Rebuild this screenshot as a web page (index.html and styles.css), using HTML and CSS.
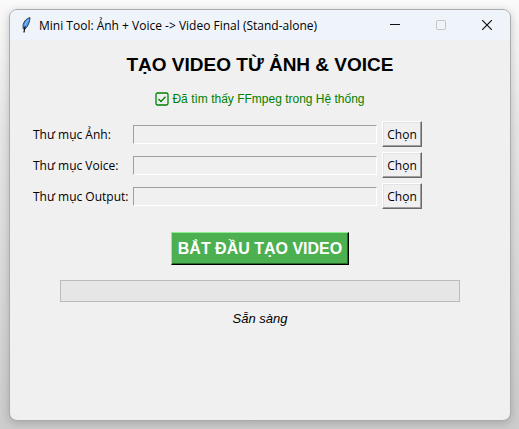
FILE: index.html
```
<!DOCTYPE html>
<html lang="vi">
<head>
  <meta charset="UTF-8">
  <title>Mini Tool: Ảnh + Voice -> Video Final (Stand-alone)</title>
  <link rel="stylesheet" href="styles.css">
</head>
<body>
  <div class="window">
    <div class="titlebar">
      <svg class="app-icon" width="16" height="16" viewBox="0 0 16 16">
        <path d="M12 .6C8.600 1.400 6 4 5.200 7.500L5 11.500 6.800 12C10 9.800 11.900 4.500 12 .6z" fill="#4f9bf0" stroke="#26303c" stroke-width=".9"/>
        <path d="M7.200 9.500C6.600 11.500 6.200 13.500 6 15.500" fill="none" stroke="#0d1117" stroke-width="1.300"/>
        <path d="M10.500 2.500L7 8" fill="none" stroke="#8fc2fa" stroke-width="1"/>
      </svg>
      <span class="title-text">Mini Tool: Ảnh + Voice -&gt; Video Final (Stand-alone)</span>
      <div class="window-buttons">
        <button type="button" class="win-btn" aria-label="Minimize">
          <svg width="10" height="10" viewBox="0 0 10 10"><path d="M0 4.500h10" stroke="#111"/></svg>
        </button>
        <button type="button" class="win-btn" aria-label="Maximize" disabled>
          <svg width="10" height="10" viewBox="0 0 10 10"><rect x=".5" y=".5" width="9" height="9" rx="1" fill="none" stroke="#c3c5c9"/></svg>
        </button>
        <button type="button" class="win-btn" aria-label="Close">
          <svg width="10" height="10" viewBox="0 0 10 10"><path d="M0 0l10 10M10 0L0 10" stroke="#111" stroke-width="1.200"/></svg>
        </button>
      </div>
    </div>

    <div class="content">
      <h1>TẠO VIDEO TỪ ẢNH &amp; VOICE</h1>

      <div class="ffmpeg-status">
        <svg width="14" height="14" viewBox="0 0 14 14">
          <rect x="1" y="1" width="12" height="12" rx="1.500" fill="none" stroke="#008000" stroke-width="1.300"/>
          <path d="M3.500 7l2.500 2.500 4.500-4.800" fill="none" stroke="#008000" stroke-width="1.300"/>
        </svg>
        <span>Đã tìm thấy FFmpeg trong Hệ thống</span>
      </div>

      <form class="folders">
        <label for="imageDir">Thư mục Ảnh:</label>
        <input type="text" id="imageDir" readonly>
        <button type="button" class="browse">Chọn</button>

        <label for="voiceDir">Thư mục Voice:</label>
        <input type="text" id="voiceDir" readonly>
        <button type="button" class="browse">Chọn</button>

        <label for="outputDir">Thư mục Output:</label>
        <input type="text" id="outputDir" readonly>
        <button type="button" class="browse">Chọn</button>
      </form>

      <button type="button" class="start">BẮT ĐẦU TẠO VIDEO</button>

      <progress class="progress" value="0" max="100" aria-labelledby="state"></progress>
      <div class="state" id="state">Sẵn sàng</div>
    </div>
  </div>
</body>
</html>
```
FILE: styles.css
```
* { box-sizing: border-box; }
body {
  display: flex;
  min-height: 100vh;
  margin: 0;
  padding: 9px 8px 8px 9px;
  background: linear-gradient(#fafafa, #e6e6e6 30%, #cccccc);
  font-family: "Open Sans", "Noto Sans", sans-serif;
  font-size: 12px;
  color: #000;
}
.window {
  flex: 1;
  display: flex;
  flex-direction: column;
  border: 1px solid #acacac;
  border-radius: 8px;
  background: #f0f0f0;
  box-shadow: 0 2px 10px rgba(0, 0, 0, 0.2);
  overflow: hidden;
}
.titlebar {
  display: flex;
  align-items: center;
  height: 30px;
  padding-left: 8px;
  background: #eff4fa;
}
.title-text {
  margin-left: 5px;
  white-space: nowrap;
}
.window-buttons {
  display: flex;
  margin-left: auto;
}
.win-btn {
  display: flex;
  align-items: center;
  justify-content: center;
  width: 46px;
  height: 28px;
  padding: 0;
  border: 0;
  background: none;
}
.content {
  display: flex;
  flex-direction: column;
  align-items: center;
  padding: 13px 0;
}
h1 {
  margin: 0;
  font: bold 19px/24px "Liberation Sans", Arial, sans-serif;
}
.ffmpeg-status {
  display: flex;
  align-items: center;
  gap: 3px;
  margin-top: 14px;
  color: #008000;
  font: 12px/16px "Liberation Sans", Arial, sans-serif;
}
.folders {
  display: grid;
  grid-template-columns: 95px 244px 40px;
  align-items: center;
  align-self: flex-start;
  gap: 5px;
  margin: 14px 0 0 23px;
  white-space: nowrap;
}
.folders input {
  width: 100%;
  height: 19px;
  padding: 0 2px;
  border: 1px solid;
  border-color: #a0a0a0 #fff #fff #a0a0a0;
  background: #f0f0f0;
}
.browse {
  height: 26px;
  padding: 0;
  border: 1px solid;
  border-color: #fff #696969 #696969 #fff;
  background: #f0f0f0;
  box-shadow: inset -1px -1px #a0a0a0, inset 1px 1px #e3e3e3;
  font: inherit;
  color: #000;
}
.start {
  height: 33px;
  margin-top: 23px;
  padding: 0 6px;
  border: 1px solid;
  border-color: #90ee90 #000 #000 #90ee90;
  background: #4caf50;
  box-shadow: inset -1px -1px #266828;
  color: #fff;
  font: bold 16px/20px "Liberation Sans", Arial, sans-serif;
}
.progress {
  appearance: none;
  display: block;
  width: 80%;
  height: 22px;
  margin-top: 15px;
  border: 1px solid #bcbcbc;
  background: #e6e6e6;
}
.progress::-webkit-progress-bar { background: #e6e6e6; }
.progress::-webkit-progress-value { background: #06b025; }
.state {
  margin-top: 9px;
  font: italic 13px/16px "Liberation Sans", Arial, sans-serif;
}
```
